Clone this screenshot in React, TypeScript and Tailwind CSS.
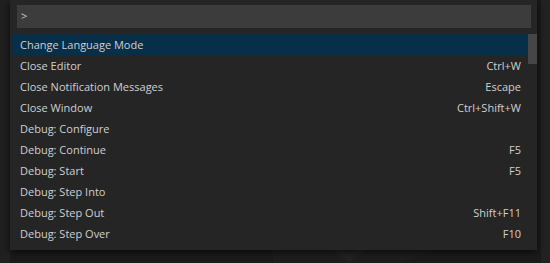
import React from "react";

const items: [string, string][] = [
  ["Change Language Mode", ""],
  ["Close Editor", "Ctrl+W"],
  ["Close Notification Messages", "Escape"],
  ["Close Window", "Ctrl+Shift+W"],
  ["Debug: Configure", ""],
  ["Debug: Continue", "F5"],
  ["Debug: Start", "F5"],
  ["Debug: Step Into", ""],
  ["Debug: Step Out", "Shift+F11"],
  ["Debug: Step Over", "F10"],
];

export default function App() {
  return (
    <div
      className="relative h-[263px] w-[550px] overflow-hidden bg-[#1e1e1e] pl-[10px]"
      style={{ fontFamily: '"Open Sans", "Noto Sans", sans-serif' }}
    >
      {/* editor watermark behind the widget */}
      <svg className="absolute left-0 top-0" width="550" height="263" viewBox="0 0 550 263">
        <rect x="0" y="0" width="550" height="263" fill="#1b1b1b" />
        <rect x="0" y="0" width="10" height="263" fill="#202020" />
        <rect x="541" y="0" width="9" height="263" fill="#222222" />
        <polygon points="273,250 435,250 400,263 273,263" fill="#1e1e1e" />
        <polygon points="333,250 365,250 349,263" fill="#232323" />
      </svg>
      <div className="relative w-[527px] bg-[#252526] pt-[5px] pb-[6px] shadow-[0_2px_8px_rgba(0,0,0,0.7)]">
        <div className="ml-[7px] flex h-[23px] w-[514px] items-center bg-[#3c3c3c] pl-[4px] text-[11px] text-[#cccccc]">
          &gt;
        </div>
        <div className="relative mt-[6px]">
          {items.map(([label, key], i) => (
            <div
              key={label}
              className={`flex h-[21px] items-center justify-between pt-px text-[11px] text-[#d0d0d0] ${
                i === 0
                  ? "ml-px mr-[9px] pl-[9px] pr-[7px] bg-[#062f4a]"
                  : "pl-[10px] pr-[16px]"
              }`}
            >
              <span>{label}</span>
              <span>{key}</span>
            </div>
          ))}
          <div className="absolute right-0 top-0 h-[30px] w-[9px] bg-[rgba(121,121,121,0.4)]" />
        </div>
      </div>
    </div>
  );
}
